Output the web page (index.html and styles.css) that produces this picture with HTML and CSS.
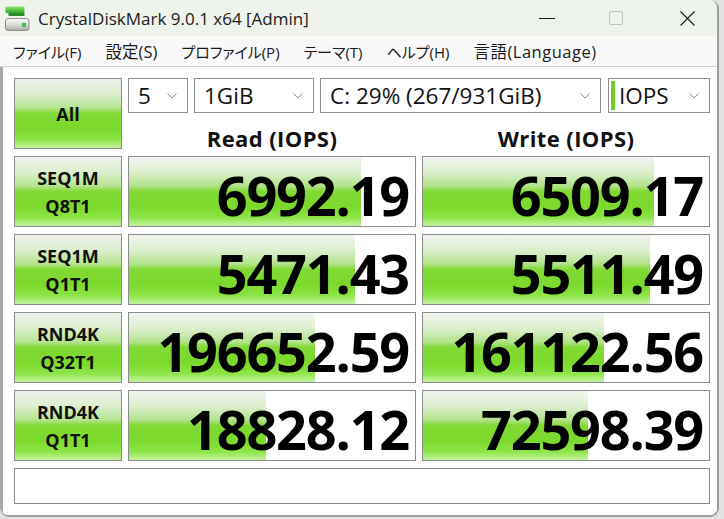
FILE: index.html
```html
<!DOCTYPE html>
<html lang="ja">
<head>
<meta charset="utf-8">
<title>CrystalDiskMark 9.0.1 x64 [Admin]</title>
<link rel="stylesheet" href="styles.css">
</head>
<body>
<div class="window">
  <div class="titlebar">
    <svg class="appicon" width="25" height="25" viewBox="0 0 25 25">
      <defs>
        <linearGradient id="gtop" x1="0" y1="0" x2="0" y2="1">
          <stop offset="0" stop-color="#8be866"/>
          <stop offset="1" stop-color="#2fa52b"/>
        </linearGradient>
        <linearGradient id="gbody" x1="0" y1="0" x2="0" y2="1">
          <stop offset="0" stop-color="#fafafa"/>
          <stop offset="0.5" stop-color="#dcdcdc"/>
          <stop offset="1" stop-color="#a9a9a9"/>
        </linearGradient>
      </defs>
      <rect x="0.5" y="0.5" width="19" height="6.5" rx="1" fill="url(#gtop)"/>
      <rect x="3.5" y="7" width="16" height="3" fill="#2b8e2b"/>
      <rect x="0.5" y="12.5" width="23.5" height="12" rx="2.5" fill="url(#gbody)" stroke="#8e8e8e"/>
      <rect x="17" y="17" width="4" height="4" fill="#3fbf3a"/>
    </svg>
    <span class="title">CrystalDiskMark 9.0.1 x64 [Admin]</span>
    <div class="controls">
      <svg class="ctl-min" width="16" height="16" viewBox="0 0 16 16"><line x1="0" y1="8.5" x2="16" y2="8.5" stroke="#1a1a1a" stroke-width="1"/></svg>
      <svg class="ctl-max" width="14" height="14" viewBox="0 0 14 14"><rect x="0.5" y="0.5" width="13" height="13" rx="1.5" fill="none" stroke="#c2c2c2"/></svg>
      <svg class="ctl-close" width="15" height="15" viewBox="0 0 15 15"><path d="M0.5 0.5 L14.5 14.5 M14.5 0.5 L0.5 14.5" stroke="#1a1a1a" stroke-width="1.1" fill="none"/></svg>
    </div>
  </div>
  <div class="menubar">
    <span class="menu">ファイル(F)</span>
    <span class="menu kanji">設定(S)</span>
    <span class="menu">プロファイル(P)</span>
    <span class="menu">テーマ(T)</span>
    <span class="menu">ヘルプ(H)</span>
    <span class="menu kanji lang">言語(Language)</span>
  </div>
  <div class="client">
    <div class="grid">
      <div class="btn all">All</div>
      <div class="top">
        <div class="combos">
          <div class="combo c-count"><span>5</span><svg class="chev" width="10" height="6" viewBox="0 0 10 6"><polyline points="0.5,0.5 5,5 9.5,0.5" fill="none" stroke="#8a8a8a"/></svg></div>
          <div class="combo c-size"><span>1GiB</span><svg class="chev" width="10" height="6" viewBox="0 0 10 6"><polyline points="0.5,0.5 5,5 9.5,0.5" fill="none" stroke="#8a8a8a"/></svg></div>
          <div class="combo c-drive"><span>C: 29% (267/931GiB)</span><svg class="chev" width="10" height="6" viewBox="0 0 10 6"><polyline points="0.5,0.5 5,5 9.5,0.5" fill="none" stroke="#8a8a8a"/></svg></div>
          <div class="combo c-unit"><span class="unit-mark"></span><span class="unit-text">IOPS</span><svg class="chev" width="10" height="6" viewBox="0 0 10 6"><polyline points="0.5,0.5 5,5 9.5,0.5" fill="none" stroke="#8a8a8a"/></svg></div>
        </div>
        <div class="heads">
          <div class="head">Read (IOPS)</div>
          <div class="head">Write (IOPS)</div>
        </div>
      </div>

      <div class="btn lbl"><span>SEQ1M</span><span>Q8T1</span></div>
      <div class="val" style="background-size:232px 100%">6992.19</div>
      <div class="val" style="background-size:231px 100%">6509.17</div>

      <div class="btn lbl"><span>SEQ1M</span><span>Q1T1</span></div>
      <div class="val" style="background-size:226px 100%">5471.43</div>
      <div class="val" style="background-size:227px 100%">5511.49</div>

      <div class="btn lbl"><span>RND4K</span><span>Q32T1</span></div>
      <div class="val" style="background-size:186px 100%">196652.59</div>
      <div class="val" style="background-size:181px 100%">161122.56</div>

      <div class="btn lbl"><span>RND4K</span><span>Q1T1</span></div>
      <div class="val" style="background-size:137px 100%">18828.12</div>
      <div class="val" style="background-size:165px 100%">72598.39</div>

      <div class="comment"></div>
    </div>
  </div>
</div>
</body>
</html>
```

FILE: styles.css
```css
html, body {
  margin: 0;
  padding: 0;
}

body {
  width: 724px;
  height: 519px;
  overflow: hidden;
  background: #e2e2e2;
  font-family: "Open Sans", "Noto Sans CJK JP", sans-serif;
  color: #000;
}

.window {
  width: 717px;
  height: 515px;
  display: flex;
  flex-direction: column;
  background: #fff;
  border-right: 2px solid #9d9d9d;
  border-bottom: 2px solid #9d9d9d;
  border-radius: 0 9px 9px 9px;
  overflow: hidden;
}

/* title bar */
.titlebar {
  height: 36px;
  flex: none;
  display: flex;
  align-items: center;
  background: #eef3ec;
  padding-left: 5px;
}

.appicon {
  flex: none;
}

.title {
  margin-left: 8px;
  font-size: 17px;
  color: #1b1b1b;
  white-space: nowrap;
}

.controls {
  margin-left: auto;
  margin-right: 22px;
  display: flex;
  align-items: center;
}

.ctl-max {
  margin-left: 54px;
}

.ctl-close {
  margin-left: 57px;
}

/* menu bar */
.menubar {
  height: 30px;
  flex: none;
  display: flex;
  align-items: center;
  gap: 24px;
  padding-left: 13px;
  background: #f9f9f9;
  border-bottom: 1px solid #d4d4d4;
  font-family: "Open Sans", "Noto Sans CJK JP", sans-serif;
  font-feature-settings: "palt";
  font-size: 15px;
  color: #1a1a1a;
}

.menu {
  white-space: nowrap;
}

.menu.kanji {
  font-size: 16.5px;
}

.menu.lang {
  letter-spacing: 0.5px;
}

/* client area */
.client {
  flex: 1;
  background: #fff;
  border-left: 3px solid #a9a9a9;
  padding: 11px 0 0 11px;
}

.grid {
  display: grid;
  grid-template-columns: 108px 288px 288px;
  grid-template-rows: 71px 71px 71px 71px 71px 36px;
  column-gap: 6px;
  row-gap: 7px;
}

.btn {
  box-sizing: border-box;
  border: 1px solid #8c8c8c;
  background: linear-gradient(to bottom,
    #eef1ec 0%,
    #dcefcf 22%,
    #b5e48f 42%,
    #82d934 50%,
    #7cd92c 72%,
    #8ee548 88%,
    #c6f3a3 100%);
  font-weight: 700;
  font-size: 18px;
  line-height: 28px;
  color: #111;
}

.all {
  display: flex;
  align-items: center;
  justify-content: center;
}

.lbl {
  display: flex;
  flex-direction: column;
  align-items: center;
  justify-content: center;
}

.top {
  grid-column: 2 / 4;
  display: flex;
  flex-direction: column;
}

.combos {
  display: flex;
  height: 35px;
}

.combo {
  box-sizing: border-box;
  height: 35px;
  border: 1px solid #8f8f8f;
  background: #fff;
  display: flex;
  align-items: center;
  padding: 0 10px 0 9px;
  font-size: 22.5px;
  color: #111;
  white-space: nowrap;
}

.combo .chev {
  margin-left: auto;
  flex: none;
}

.c-count { width: 60px; }
.c-size { width: 120px; margin-left: 6px; }
.c-drive { width: 281px; margin-left: 6px; }
.c-unit { width: 102px; margin-left: 7px; padding-left: 2px; }

.unit-mark {
  width: 4px;
  height: 29px;
  background: #6fcf2f;
  flex: none;
}

.unit-text {
  margin-left: 4px;
}

.heads {
  display: flex;
  column-gap: 6px;
  margin-top: 12px;
}

.head {
  width: 288px;
  text-align: center;
  font-weight: 700;
  font-size: 22px;
  line-height: 26px;
  letter-spacing: 0.4px;
  color: #111;
}

.val {
  box-sizing: border-box;
  border: 1px solid #8c8c8c;
  background: #fff linear-gradient(to bottom,
    #f1f4ef 0%,
    #dcefcf 22%,
    #b2e38b 42%,
    #82d934 50%,
    #7cd92c 72%,
    #8ee548 88%,
    #c6f3a3 100%) no-repeat left top;
  display: flex;
  align-items: center;
  justify-content: flex-end;
  padding: 6px 6px 0 0;
  font-weight: 700;
  font-size: 54px;
  letter-spacing: -1.2px;
  color: #000;
  white-space: nowrap;
}

.comment {
  grid-column: 1 / 4;
  box-sizing: border-box;
  border: 1px solid #8c8c8c;
  background: #fff;
}
```
